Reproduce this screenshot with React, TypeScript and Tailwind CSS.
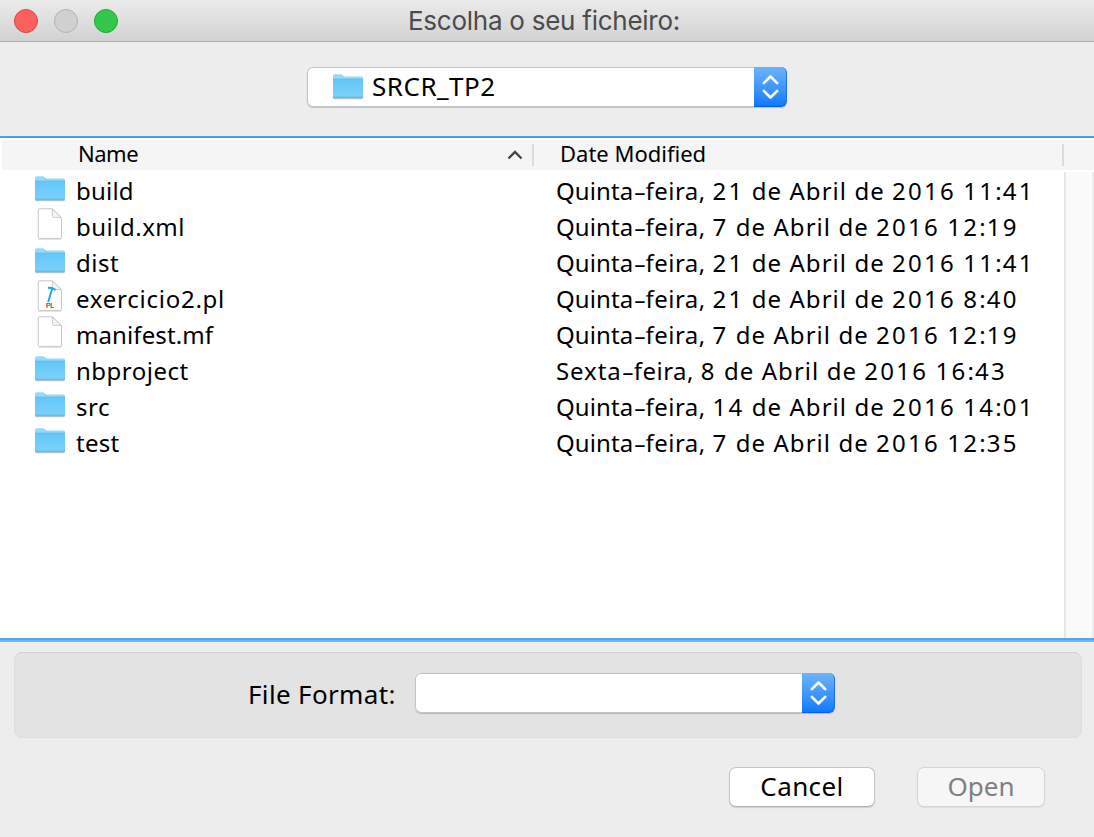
import React from "react";

function Folder() {
  return (
    <svg width="32" height="32" viewBox="0 0 32 32" className="block shrink-0">
      <defs>
        <linearGradient id="folderFront" x1="0" y1="0" x2="0" y2="1">
          <stop offset="0" stopColor="#64c7f6" />
          <stop offset="1" stopColor="#7bd1fa" />
        </linearGradient>
      </defs>
      <path d="M1.5 27.6h29" stroke="#000" strokeOpacity="0.22" strokeWidth="1.2" />
      <path d="M1 5.2Q1 3.2 2.6 3.2H9Q10 3.2 10.8 4.2T12.8 5.6H29.6Q31 5.6 31 7V26.2Q31 27 30 27H2Q1 27 1 26.2Z" fill="#93dafc" />
      <path d="M1 8H31V26.2Q31 27 30 27H2Q1 27 1 26.2Z" fill="url(#folderFront)" />
      <path d="M1 8.1H31" stroke="#62bce6" strokeWidth="0.8" />
      <path d="M1 25.6H31" stroke="#67bfe8" strokeWidth="0.6" />
      <path d="M1.3 26.8H30.7" stroke="#58aed8" strokeWidth="0.8" />
    </svg>
  );
}

function Doc({ pl }: { pl?: boolean }) {
  return (
    <svg width="32" height="32" viewBox="0 0 32 32" className="-mt-px block shrink-0">
      <path d="M4.5 31.1H27.5" stroke="#000" strokeOpacity="0.18" strokeWidth="1" />
      <path d="M5 0.8H18.4L27.5 9.8V29.5Q27.5 30.4 26.6 30.4H5.2Q4.3 30.4 4.3 29.5V1.6Q4.3 0.8 5 0.8Z" fill="#fff" stroke="#c2c2c2" strokeWidth="0.9" />
      <path d="M18.4 1V8.2Q18.4 9.4 19.6 9.4H27.2Z" fill="#f5f5f5" stroke="#c6c6c6" strokeWidth="0.9" />
      {pl && (
        <>
          <path d="M18.2 8.6L14.2 22" stroke="#19a2f4" strokeWidth="1.9" />
          <path d="M14 8Q17 7.1 21.8 10" stroke="#19a2f4" strokeWidth="2" fill="none" />
          <text x="16" y="27.8" textAnchor="middle" fontSize="6.6" fill="#333" stroke="#333" strokeWidth="0.15" fontFamily="Liberation Sans, sans-serif">PL</text>
        </>
      )}
    </svg>
  );
}

function Stepper() {
  return (
    <div className="flex h-[40px] w-[33px] shrink-0 items-center justify-center rounded-r-[6px] border-r border-b border-r-[#1f72f5] border-b-[#0a5cf0] bg-linear-to-b from-[#6cb3fa] to-[#067aff]">
      <svg width="17" height="26" viewBox="0 0 17 26" fill="none" stroke="#fff" strokeWidth="2.6" className="relative left-[0.5px]">
        <path d="M1.8 9.2L8.5 2.5L15.2 9.2M1.8 16.8L8.5 23.5L15.2 16.8" strokeLinejoin="round" strokeLinecap="round" />
      </svg>
    </div>
  );
}

const files = [
  { name: "build", kind: "folder", weekday: "Quinta", date: "21 de Abril de 2016 11:41", track: "tracking-[0.2px]" },
  { name: "build.xml", kind: "doc", weekday: "Quinta", date: "7 de Abril de 2016 12:19", track: "tracking-[0.5px]" },
  { name: "dist", kind: "folder", weekday: "Quinta", date: "21 de Abril de 2016 11:41", track: "tracking-[0.5px]" },
  { name: "exercicio2.pl", kind: "pl", weekday: "Quinta", date: "21 de Abril de 2016 8:40", track: "tracking-[0.75px]" },
  { name: "manifest.mf", kind: "doc", weekday: "Quinta", date: "7 de Abril de 2016 12:19", track: "tracking-[0.1px]" },
  { name: "nbproject", kind: "folder", weekday: "Sexta", date: "8 de Abril de 2016 16:43", track: "tracking-[0.5px]" },
  { name: "src", kind: "folder", weekday: "Quinta", date: "14 de Abril de 2016 14:01", track: "tracking-[0.5px]" },
  { name: "test", kind: "folder", weekday: "Quinta", date: "7 de Abril de 2016 12:35", track: "tracking-[0.3px]" },
];

function DateText({ weekday, date }: { weekday: string; date: string }) {
  return (
    <span className="whitespace-pre">
      <span className={weekday === "Sexta" ? "tracking-[0.9px]" : "tracking-[0.1px]"}>{weekday}</span>
      <span className="mx-[2.2px] inline-block scale-x-[1.6]">-</span>
      <span className="tracking-[0.5px]">feira, </span>
      {date.split(/(\d+)/).map((part, i) => (
        <span key={i} className={/\d/.test(part) ? "tracking-[2.25px]" : "tracking-[1.05px]"}>{part}</span>
      ))}
    </span>
  );
}

export default function App() {
  return (
    <div className="flex h-[837px] w-[1094px] flex-col overflow-hidden bg-[#ededed] font-['Noto_Sans',sans-serif] text-black">
      <header className="grid h-[42px] shrink-0 grid-cols-[1fr_auto_1fr] items-center border-b border-[#b0b0b0] bg-linear-to-b from-[#ebebeb] to-[#d2d2d2]">
        <div className="flex gap-4 pl-[14px]">
          <span className="size-6 rounded-full border border-[#e2463f] bg-[#fc615d]" />
          <span className="size-6 rounded-full border border-[#b3b3b3] bg-[#d0d0d0]" />
          <span className="size-6 rounded-full border border-[#24a732] bg-[#34c84a]" />
        </div>
        <h1 className="pr-[6px] font-[Inter,sans-serif] text-[26px] leading-[40px] tracking-[-0.25px] whitespace-nowrap text-[#4b4b4b]">Escolha o seu ficheiro:</h1>
      </header>

      <div className="flex h-[94px] shrink-0 justify-center pt-[25px]">
        <div className="flex h-[40px] w-[480px] rounded-[6px] bg-white shadow-[inset_0_0_0_1px_#c3c3c3,0_1px_1px_#00000030]">
          <div className="flex grow items-center pl-[25px]">
            <Folder />
            <span className="pb-[2px] pl-[8px] text-[26px] leading-[38px] tracking-[0.5px]">SRCR_TP2</span>
          </div>
          <Stepper />
        </div>
      </div>

      <main className="flex h-[506px] shrink-0 flex-col border-t-2 border-b-2 border-t-[#4a9fe3] border-b-[#6ab8fb] bg-white pt-[2px]">
        <div className="ml-[2px] flex h-[30px] shrink-0 items-center bg-[#f5f5f5] text-[22px] leading-[30px]">
          <div className="flex w-[530px] items-center justify-between pr-[9px] pl-[76px]">
            <span className="-mt-[4px] tracking-[-0.5px]">Name</span>
            <svg width="16" height="10" viewBox="0 0 16 10" fill="none"><path d="M1.5 8.5L8 2L14.5 8.5" stroke="#444" strokeWidth="2.3" /></svg>
          </div>
          <div className="flex h-[22px] w-[532px] items-center border-r-2 border-l-2 border-[#dcdcdc] pl-[26px]"><span className="-mt-[4px]">Date Modified</span></div>
        </div>
        <div className="flex grow border-b-2 border-b-[#55a5e8] pt-[2px]">
          <div className="w-[1064px] pt-px">
            {files.map((f) => (
              <div key={f.name} className="flex h-9 items-start pl-[34px] text-[24px] leading-[36px]">
                {f.kind === "folder" ? <Folder /> : <Doc pl={f.kind === "pl"} />}
                <span className={`w-[490px] pl-[10px] ${f.track}`}>{f.name}</span>
                <DateText weekday={f.weekday} date={f.date} />
              </div>
            ))}
          </div>
          <div className="w-[30px] border-r-2 border-l-2 border-r-[#ececec] border-l-[#e6e6e6] bg-[#fafafa]" />
        </div>
      </main>

      <section className="mt-[10px] mr-[12px] ml-[14px] flex h-[86px] shrink-0 rounded-[8px] border border-[#dcdcdc] border-t-[#d2d2d2] bg-[#e3e3e3] pt-[20px] pl-[233px]">
        <label className="w-[167px] text-[26px] leading-[42px] tracking-[0.35px] whitespace-nowrap">File Format:</label>
        <div className="flex h-[40px] w-[420px] justify-end rounded-[6px] bg-white shadow-[inset_0_0_0_1px_#c3c3c3,0_1px_1px_#00000030]">
          <Stepper />
        </div>
      </section>

      <footer className="flex justify-end gap-[42px] pt-[29px] pr-[49px] text-[26px]">
        <button className="h-[40px] w-[146px] rounded-[7px] border border-[#c4c4c4] border-b-[#b0b0b0] bg-white pb-[2px] leading-[36px] tracking-[0.4px] shadow-[0_1px_1px_#00000020]">Cancel</button>
        <button className="h-[40px] w-[128px] rounded-[7px] border border-[#d4d4d4] bg-[#f6f6f6] pb-[2px] leading-[36px] text-[#808080] shadow-[0_1px_1px_#00000010]">Open</button>
      </footer>
    </div>
  );
}
